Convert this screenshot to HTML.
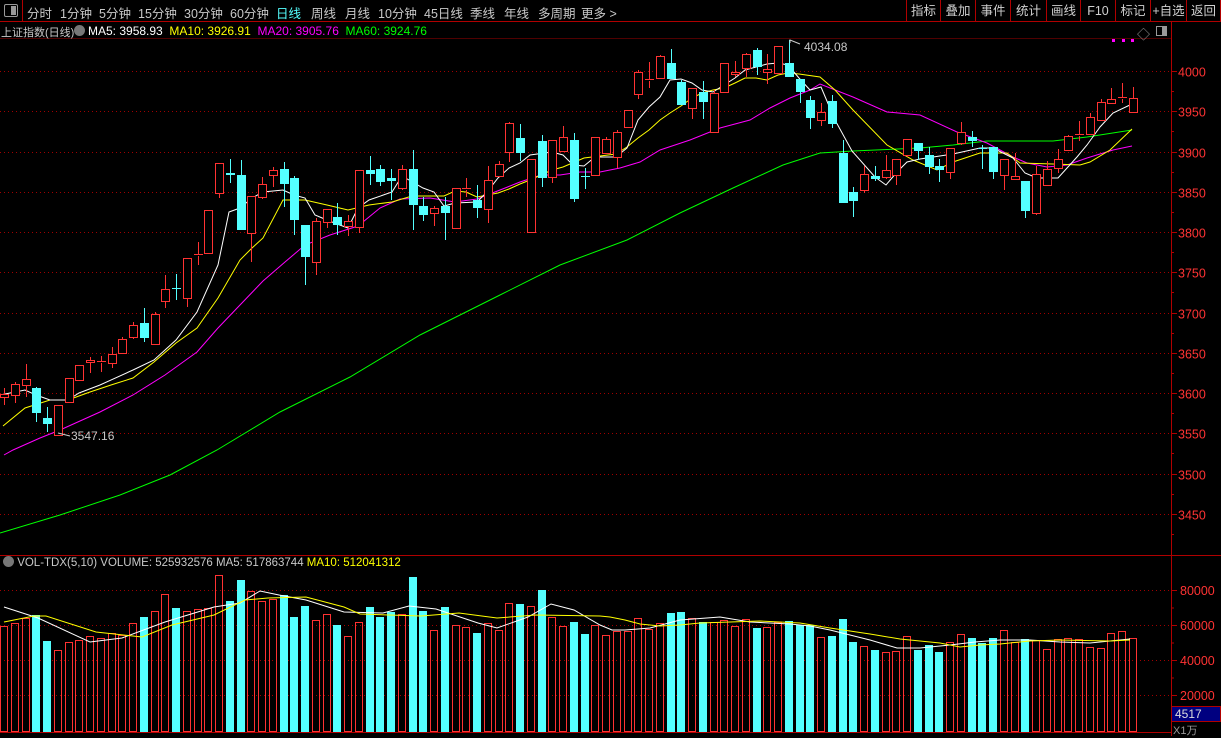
<!DOCTYPE html>
<html><head><meta charset="utf-8"><style>
*{margin:0;padding:0;box-sizing:border-box}
body{width:1221px;height:736px;background:#000;overflow:hidden;position:relative;font-family:"Liberation Sans","Noto Sans CJK SC",sans-serif;font-size:12px;color:#c8c8c8}
.t{position:absolute;white-space:nowrap}
#top span{position:absolute;top:3px;font-size:12.5px;color:#c8c8c8}
.btn{position:absolute;top:0;height:22px;border-left:1px solid #b00000;font-size:12.5px;color:#d0d0d0;text-align:center;line-height:22px}
svg{position:absolute;left:0;top:0}
</style></head><body>
<svg id="c" width="1221" height="736"></svg>
<div id="top">
<div style="position:absolute;left:4px;top:4px;width:14px;height:13px;border:1px solid #999;border-radius:2px"><div style="position:absolute;right:1px;top:1px;width:5px;height:9px;background:#999"></div></div>
<div style="position:absolute;left:22px;top:0;width:1px;height:22px;background:#b00000"></div>
<span style="left:27px">分时</span><span style="left:60px">1分钟</span><span style="left:99px">5分钟</span><span style="left:138px">15分钟</span><span style="left:184px">30分钟</span><span style="left:230px">60分钟</span><span style="left:276px;color:#5ff">日线</span><span style="left:311px">周线</span><span style="left:345px">月线</span><span style="left:378px">10分钟</span><span style="left:424px">45日线</span><span style="left:470px">季线</span><span style="left:504px">年线</span><span style="left:538px">多周期</span><span style="left:581px">更多 &gt;</span>
</div>
<div class="btn" style="left:906px;width:34px">指标</div><div class="btn" style="left:940px;width:35px">叠加</div><div class="btn" style="left:975px;width:35px">事件</div><div class="btn" style="left:1010px;width:36px">统计</div><div class="btn" style="left:1046px;width:34px">画线</div><div class="btn" style="left:1080px;width:35px">F10</div><div class="btn" style="left:1115px;width:35px">标记</div><div class="btn" style="left:1150px;width:36px">+自选</div><div class="btn" style="left:1186px;width:35px;border-right:1px solid #b00000">返回</div>
<div class="t" style="left:1px;top:24px;font-size:11px">上证指数(日线)</div>
<div style="position:absolute;left:74px;top:25px;width:11px;height:11px;border-radius:50%;background:#777"></div>
<div class="t" style="left:88px;top:24px;font-size:12px"><span style="color:#fff">MA5: 3958.93</span>&nbsp; <span style="color:#ff0">MA10: 3926.91</span>&nbsp; <span style="color:#f0f">MA20: 3905.76</span>&nbsp; <span style="color:#0f0">MA60: 3924.76</span></div>
<div class="t" style="left:1137px;top:24px;color:#999;font-size:13px">◇</div>
<div style="position:absolute;left:1156px;top:26px;width:11px;height:10px;border:1px solid #999"><div style="position:absolute;right:0;top:0;width:4px;height:8px;background:#999"></div></div>
<div class="t" style="left:3px;top:556px;font-size:11.5px"><span style="display:inline-block;width:11px;height:11px;border-radius:50%;background:#777;vertical-align:-1px"></span> VOL-TDX(5,10) VOLUME: 525932576 MA5: 517863744 <span style="color:#ff0">MA10: 512041312</span></div>
<div class="t" style="left:804px;top:40px;color:#c8c8c8;font-size:12px">4034.08</div>
<div class="t" style="left:71px;top:429px;color:#c8c8c8;font-size:12px">3547.16</div>
<div style="position:absolute;left:1171px;top:706px;width:50px;height:16px;background:#000080;border:1px solid #b00000;color:#ddd;font-size:12px;padding-left:3px;line-height:14px">4517</div>
<div class="t" style="left:1173px;top:722px;color:#999;font-size:11px">X1万</div>
<script>
var s='';var W=1171;
function ln(x1,y1,x2,y2,c,d){s+='<line x1="'+x1+'" y1="'+y1+'" x2="'+x2+'" y2="'+y2+'" stroke="'+c+'" stroke-width="1"'+(d?' stroke-dasharray="1,3"':'')+' shape-rendering="crispEdges"/>';}
function tx(x,y,t,c){s+='<text x="'+x+'" y="'+y+'" fill="'+c+'" font-family="Liberation Sans" font-size="12.5">'+t+'</text>';}
ln(0,21.5,1221,21.5,'#b00000');
ln(0,38.5,W,38.5,'#500000');
ln(W+.5,22,W+.5,736,'#b00000');
ln(0,555.5,1221,555.5,'#b00000');
ln(0,732.5,W,732.5,'#b00000');
for(var p=4000;p>=3450;p-=50){var y=Math.round(71+(4000-p)*0.805)+.5;ln(0,y,W,y,'#a00000',1);ln(W,y,W+6,y,'#b00000');tx(1178,y+5,p,'#ff3333');var ym=Math.round(71+(4025-p)*0.805)+.5;ln(W,ym,W+3,ym,'#b00000');}
var vy=[[80000,590],[60000,625],[40000,660],[20000,695]];
vy.forEach(function(v){ln(0,v[1]+.5,W,v[1]+.5,'#a00000',1);ln(W,v[1]+.5,W+6,v[1]+.5,'#b00000');tx(1180,v[1]+5,v[0],'#ff3333');ln(W,v[1]+18,W+3,v[1]+18,'#b00000');});
var C=[[1,394,397,388,405],[1,384,395,382,403],[1,379,385,364,397],[0,388,413,387,422],[0,418,424,407,432],[1,405,435,405,435],[1,378,402,378,403],[1,365,380,365,380],[1,360,362,357,373],[1,361,362,356,372],[1,354,363,347,368],[1,339,353,337,354],[1,325,337,322,339],[0,323,338,308,342],[1,314,344,312,344],[1,289,301,275,308],[0,288,289,274,300],[1,258,298,258,307],[1,254,255,242,265],[1,210,253,210,253],[1,163,193,163,198],[0,173,175,159,183],[0,175,230,160,230],[1,196,233,196,262],[1,184,197,177,199],[1,170,175,167,187],[0,169,184,162,207],[0,178,220,176,235],[0,225,257,225,285],[1,221,262,218,275],[1,209,222,209,228],[0,217,225,203,235],[1,221,226,215,236],[1,170,227,170,233],[0,170,174,156,185],[0,169,182,165,186],[0,178,181,169,200],[1,169,188,165,190],[0,169,205,150,230],[0,206,215,197,221],[1,208,213,206,226],[0,206,213,197,240],[1,188,228,188,228],[1,188,189,178,197],[0,200,208,185,218],[1,180,209,166,223],[1,164,176,161,177],[1,123,152,122,162],[0,138,153,124,161],[1,159,232,159,232],[0,141,178,135,187],[1,140,177,140,183],[1,137,151,126,152],[0,140,199,133,202],[0,176,177,168,189],[1,137,175,137,175],[1,139,153,137,153],[1,132,157,130,168],[1,110,127,110,127],[1,72,94,70,99],[1,79,80,62,88],[1,56,78,55,79],[0,63,79,49,79],[0,82,105,80,105],[1,88,108,88,119],[0,92,102,81,119],[1,93,132,90,132],[1,63,92,63,92],[1,72,74,61,77],[1,54,68,53,77],[0,50,67,48,75],[1,69,72,54,84],[1,46,73,46,73],[0,63,77,40,77],[0,79,92,79,103],[0,100,118,96,129],[1,112,120,103,126],[0,101,124,95,128],[0,153,203,140,203],[0,192,201,187,217],[1,174,190,166,193],[0,176,179,166,181],[1,170,177,155,179],[1,159,175,159,185],[1,139,155,139,157],[0,143,151,143,160],[0,155,167,147,174],[0,166,170,159,182],[1,148,172,148,179],[1,132,143,122,145],[0,137,141,131,147],[0,148,149,145,169],[0,147,172,147,179],[1,159,175,159,190],[1,176,179,153,179],[0,181,211,181,218],[1,174,213,166,215],[1,169,185,161,186],[1,159,168,149,173],[1,136,150,135,150],[1,134,135,121,141],[1,117,134,113,134],[1,102,120,99,120],[1,99,103,88,103],[1,97,98,83,103],[1,98,112,87,112]];
var V=[626,623,618,615,641,650,642,640,636,638,633,635,623,617,611,594,608,611,609,608,575,601,580,591,601,599,595,617,606,620,614,625,636,622,607,617,612,614,577,611,630,607,625,627,633,623,630,603,604,606,590,617,626,622,634,625,635,631,631,618,629,623,613,612,618,622,622,620,626,619,628,627,622,621,625,625,637,636,619,642,646,650,652,651,636,650,645,652,642,634,638,643,638,630,642,639,640,649,639,638,639,647,648,633,631,638];
var R='#ff3232',B='#54ffff';
for(var i=0;i<106;i++){var x=Math.round(i*10.75),c=C[i][0]?R:B;
 if(C[i][0])s+='<rect x="'+(x+.5)+'" y="'+(V[i]+.5)+'" width="7" height="'+(731-V[i])+'" fill="none" stroke="'+R+'" stroke-width="1"/>';
 else s+='<rect x="'+x+'" y="'+V[i]+'" width="8" height="'+(732-V[i])+'" fill="'+B+'"/>';}
function pl(pts,c){s+='<polyline fill="none" stroke="'+c+'" stroke-width="1" points="'+pts+'"/>';}
pl('4,607 38,618 90,642 122,638 165,622 214,607 240,603 260,591 279,595 306,600 344,612 383,613 409,606 436,609 478,623 497,628 528,617 551,604 574,610 600,625 612,630 625,630 650,628 680,620 720,617 750,622 790,624 810,626 830,630 870,640 897,648 920,648 950,645 975,642 1000,640 1030,640 1060,642 1090,643 1110,641 1130,639','#fff');
pl('4,622 34,616 46,616 96,632 142,637 172,625 214,615 245,600 268,598 306,597 344,607 360,614 421,616 459,613 497,618 536,615 600,616 610,617 625,620 640,624 660,626 680,625 700,623 760,621 800,623 830,628 870,634 900,639 940,643 960,647 980,645 1000,644 1030,641 1060,640 1110,641 1130,640','#ff0');
pl('0,533 60,515 120,495 170,475 217,450 280,412 350,377 420,335 500,295 560,265 627,240 680,213 733,188 783,165 820,153 853,151 920,148 953,145 987,141 1053,141 1087,137 1132,130','#0f0');
pl('4,455 13,450 40,438 60,430 100,412 133,395 165,375 197,352 218,328 240,305 263,281 285,262 305,245 330,235 358,226 380,208 400,199 430,198 455,202 477,199 500,190 520,182 541,175 560,175 580,172 600,172 620,168 640,162 660,150 690,140 720,128 750,120 770,108 790,98 810,90 820,84 853,97 887,112 920,115 957,132 987,143 1013,157 1027,163 1047,167 1067,165 1087,158 1113,150 1132,146','#f0f');
pl('3,426 25,408 50,400 68,400 90,392 111,385 133,378 154,362 176,343 197,328 218,298 240,260 252,248 263,238 283,200 305,200 327,205 348,210 369,205 392,202 412,196 444,196 455,191 466,192 477,197 498,193 509,189 520,184 530,180 541,175 552,170 563,167 584,158 616,154 627,147 638,138 649,130 660,120 670,113 681,106 692,98 702,93 713,90 724,88 735,83 745,78 756,78 767,80 778,75 788,73 799,74 820,77 835,90 853,110 887,145 913,160 937,170 953,162 980,153 1007,153 1020,163 1053,164 1080,165 1090,162 1110,150 1132,129','#ff0');
pl('0,395 25,390 36,395 50,400 68,400 79,393 100,385 133,370 154,360 176,340 197,312 218,265 229,212 240,208 252,198 263,192 283,190 294,195 305,198 315,215 327,220 337,224 348,228 358,208 369,200 392,192 402,176 423,188 434,192 444,206 455,203 477,202 487,192 498,178 509,168 520,163 530,155 552,152 563,155 573,165 584,166 595,157 616,157 627,148 638,120 649,107 660,97 670,80 681,79 692,83 702,90 713,92 724,85 735,78 745,70 767,64 778,63 788,65 799,78 810,90 821,87 835,120 852,151 875,177 886,185 897,172 907,162 920,159 953,154 980,148 993,148 1013,158 1025,173 1037,178 1058,178 1077,157 1087,145 1100,127 1113,113 1132,104','#fff');
for(var i=0;i<106;i++){var d=C[i],x=Math.round(i*10.75)+4,c=d[0]?R:B;
 if(d[0]){ln(x+.5,d[3],x+.5,d[1],c);ln(x+.5,d[2]+1,x+.5,d[4],c);
  if(d[2]-d[1]<2)ln(x-4,d[1]+.5,x+5,d[1]+.5,c);else s+='<rect x="'+(x-3.5)+'" y="'+(d[1]+.5)+'" width="8" height="'+(d[2]-d[1])+'" fill="#000" stroke="'+c+'" stroke-width="1"/>';}
 else{ln(x+.5,d[3],x+.5,d[4],c);s+='<rect x="'+(x-4)+'" y="'+d[1]+'" width="9" height="'+Math.max(1,d[2]-d[1])+'" fill="'+c+'"/>';}
}
pl('790,43 790,40 800,44','#ccc');pl('58,433 70,436','#ccc');
[1112,1122,1131].forEach(function(x){s+='<rect x="'+x+'" y="39" width="3" height="3" fill="#f0f"/>';});
document.getElementById('c').innerHTML=s;
</script>
</body></html>
